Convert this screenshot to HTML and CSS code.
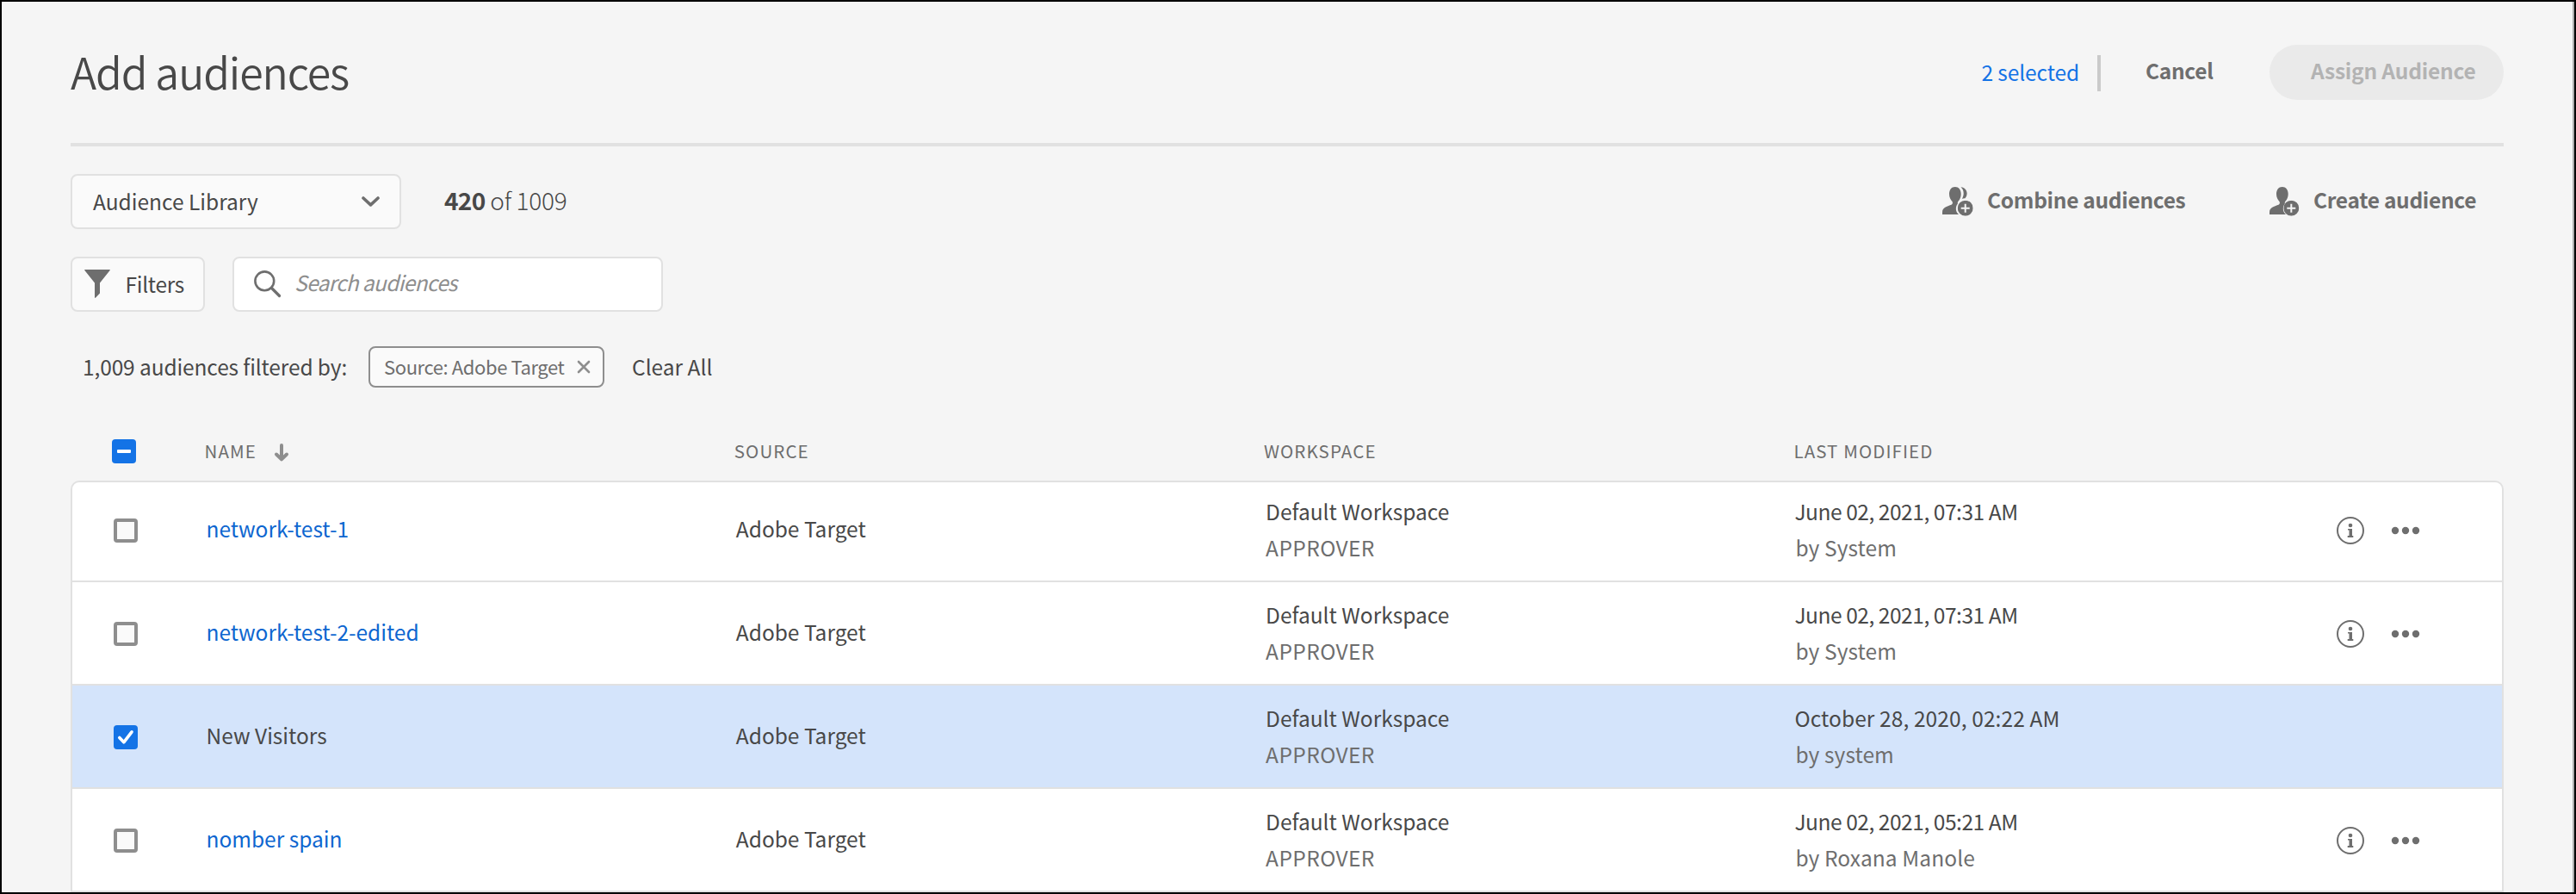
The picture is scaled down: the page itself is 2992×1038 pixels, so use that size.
FILE: index.html
```html
<!DOCTYPE html>
<html lang="en">
<head>
<meta charset="utf-8">
<title>Add audiences</title>
<link rel="stylesheet" href="styles.css">
</head>
<body>
<svg class="defs" aria-hidden="true">
  <symbol id="user" viewBox="0 0 36 34">
    <path d="M14.8 0C10.6 0 8 3.400 8 8.200C8 12 9.600 14.800 11.500 17C12.300 18.200 12 19.900 10.500 20.700C6.500 22.400 0 23.500 0 29.200V32H19C15.500 29.600 14.600 23.500 17.900 19.600C17.600 18.300 17.900 17.500 18.600 16.600C20.400 14.400 21.700 11.800 21.700 8.200C21.700 3.400 19 0 14.800 0Z"/>
  </symbol>
  <symbol id="plus" viewBox="0 0 18 18">
    <path fill-rule="evenodd" d="M9 0A9 9 0 1 1 9 18A9 9 0 1 1 9 0ZM8 4V8H4V10H8V14H10V10H14V8H10V4Z"/>
  </symbol>
  <symbol id="info" viewBox="0 0 32 32">
    <circle cx="16" cy="16" r="15" fill="none" stroke="currentColor" stroke-width="2"/>
    <circle cx="16" cy="10" r="2.300"/>
    <path d="M13 14H18V22H19.300V24H12.700V22H14.500V15.500H13Z"/>
  </symbol>
  <symbol id="more" viewBox="0 0 34 10">
    <circle cx="5" cy="5" r="4.200"/><circle cx="17" cy="5" r="4.200"/><circle cx="29" cy="5" r="4.200"/>
  </symbol>
</svg>
<div class="page">
  <header class="header">
    <h1 class="title">Add audiences</h1>
    <a class="selected-count">2 selected</a>
    <span class="divider"></span>
    <button class="cancel">Cancel</button>
    <button class="assign" disabled>Assign Audience</button>
  </header>

  <div class="toolbar">
    <div class="select"><span>Audience Library</span>
      <svg class="chevron" viewBox="0 0 21 12"><path d="M2 2L10.500 9.800L19 2" fill="none" stroke="currentColor" stroke-width="3.600" stroke-linecap="round" stroke-linejoin="round"/></svg>
    </div>
    <p class="count"><b>420</b> <span>of 1009</span></p>
    <button class="quiet combine">
      <svg class="user-icon" viewBox="0 0 36 34"><use href="#user" width="36" height="34"/><path d="M21.500 .2C26 .6 28.600 3.800 28.600 7.600C28.600 9.800 27.800 11.900 26.400 13.300C25.200 13.200 24 13.400 22.800 13.800C24 11.800 24.700 9.800 24.700 7.400C24.700 4.400 23.500 1.800 21.500 .2Z"/><use href="#plus" x="17.700" y="15.700" width="18" height="18"/></svg>
      <span>Combine audiences</span>
    </button>
    <button class="quiet create">
      <svg class="user-icon" viewBox="0 0 36 34"><use href="#user" width="36" height="34"/><use href="#plus" x="16.300" y="15.700" width="18" height="18"/></svg>
      <span>Create audience</span>
    </button>
  </div>

  <div class="search-row">
    <button class="filters">
      <svg class="funnel" viewBox="0 0 30 34"><path d="M.8 0H29.200Q30.400 0 29.600 1L18 15.500V27.500L13.200 32.500Q12 33.500 12 32V15.500L.4 1Q-.4 0 .8 0Z"/></svg>
      <span>Filters</span>
    </button>
    <div class="search">
      <svg class="magnifier" viewBox="0 0 32 32"><g fill="none" stroke="currentColor" stroke-linecap="round"><circle cx="12.300" cy="12.300" r="10.900" stroke-width="2.600"/><path d="M20.500 20.500L29.500 29.500" stroke-width="3.200"/></g></svg>
      <span>Search audiences</span>
    </div>
  </div>

  <div class="filter-row">
    <span class="filter-label">1,009 audiences filtered by:</span>
    <span class="tag"><span>Source: Adobe Target</span>
      <svg class="cross" viewBox="0 0 16 16"><path d="M2 2L14 14M14 2L2 14" fill="none" stroke="currentColor" stroke-width="2.600" stroke-linecap="round"/></svg>
    </span>
    <a class="clear">Clear All</a>
  </div>

  <div class="table">
    <div class="grid head">
      <span class="check mixed"></span>
      <span class="col-name">NAME
        <svg class="arrow" viewBox="0 0 18 22"><path d="M9 2V18M3 12.500L9 18.300L15 12.500" fill="none" stroke="currentColor" stroke-width="4" stroke-linecap="round" stroke-linejoin="round"/></svg>
      </span>
      <span>SOURCE</span>
      <span>WORKSPACE</span>
      <span>LAST MODIFIED</span>
    </div>
    <div class="body">
      <div class="grid row first">
        <span class="check"></span>
        <a class="cell link">network-test-1</a>
        <span class="cell">Adobe Target</span>
        <div class="cell lines">Default Workspace<small class="caps">APPROVER</small></div>
        <div class="cell lines date"><span class="tight">June 02, 2021, 07:31 AM</span><small>by System</small></div>
        <div class="actions"><svg class="info"><use href="#info"/></svg><svg class="more"><use href="#more"/></svg></div>
      </div>
      <div class="grid row">
        <span class="check"></span>
        <a class="cell link">network-test-2-edited</a>
        <span class="cell">Adobe Target</span>
        <div class="cell lines">Default Workspace<small class="caps">APPROVER</small></div>
        <div class="cell lines date"><span class="tight">June 02, 2021, 07:31 AM</span><small>by System</small></div>
        <div class="actions"><svg class="info"><use href="#info"/></svg><svg class="more"><use href="#more"/></svg></div>
      </div>
      <div class="grid row active">
        <span class="check on"><svg viewBox="0 0 20 20"><path d="M2.800 10.500L7.800 15.800L17 3.800" fill="none" stroke="#fff" stroke-width="3.600" stroke-linecap="round" stroke-linejoin="round"/></svg></span>
        <span class="cell">New Visitors</span>
        <span class="cell">Adobe Target</span>
        <div class="cell lines">Default Workspace<small class="caps">APPROVER</small></div>
        <div class="cell lines date"><span>October 28, 2020, 02:22 AM</span><small>by system</small></div>
      </div>
      <div class="grid row">
        <span class="check"></span>
        <a class="cell link">nomber spain</a>
        <span class="cell">Adobe Target</span>
        <div class="cell lines">Default Workspace<small class="caps">APPROVER</small></div>
        <div class="cell lines date"><span class="tight">June 02, 2021, 05:21 AM</span><small>by Roxana Manole</small></div>
        <div class="actions"><svg class="info"><use href="#info"/></svg><svg class="more"><use href="#more"/></svg></div>
      </div>
    </div>
  </div>
</div>
</body>
</html>
```
FILE: styles.css
```css
* { box-sizing: border-box; }

body {
  margin: 0;
  background: #f5f5f5;
  color: #484848;
  font: 24.5px/42px "Noto Sans CJK SC", "Open Sans", sans-serif;
}

svg { display: block; flex: none; fill: currentColor; }
button { border: 0; padding: 0; background: none; color: inherit; font: inherit; }
.defs { display: none; }

.page {
  height: 1038px;
  overflow: hidden;
  border: 2px solid #000;
  box-shadow: inset -2px 0 #adadad;
  padding: 0 82px 0 80px;
}

/* Header */
.header {
  display: flex;
  align-items: center;
  height: 168px;
  border-bottom: 4px solid #e1e1e1;
}
.title {
  flex: 1;
  margin: 0;
  padding-bottom: 4px;
  font-size: 50px;
  font-weight: 350;
  letter-spacing: -1.100px;
}
.selected-count { color: #1473e6; letter-spacing: -.1px; padding-bottom: 1px; }
.divider { width: 4px; height: 42px; margin: 2px 0 0 21px; background: #cacaca; }
.cancel { width: 78px; margin-left: 52px; padding-bottom: 5px; color: #6e6e6e; font-weight: 600; letter-spacing: -.3px; text-align: left; }
.assign {
  width: 272px;
  height: 64px;
  margin-left: 66px;
  padding: 0 0 5px 48px;
  border-radius: 32px;
  background: #eaeaea;
  color: #b3b3b3;
  font-weight: 600;
  letter-spacing: -.2px;
  text-align: left;
}

/* Toolbar */
.toolbar { display: flex; align-items: center; height: 64px; margin-top: 32px; }
.select {
  display: flex;
  align-items: center;
  justify-content: space-between;
  width: 384px;
  height: 64px;
  padding: 0 23px 0 24px;
  border: 2px solid #e1e1e1;
  border-radius: 8px;
  background: #fafafa;
}
.chevron { width: 21px; height: 12px; color: #6e6e6e; }
.count { flex: 1; margin: 0 0 0 50px; padding-bottom: 4px; font-size: 28px; font-weight: 300; letter-spacing: -.3px; white-space: nowrap; }
.count b { font-weight: 600; letter-spacing: -.7px; }
.quiet { display: flex; align-items: center; color: #6e6e6e; font-weight: 600; letter-spacing: -.3px; white-space: nowrap; }
.quiet span { padding-bottom: 5px; }
.user-icon { width: 36px; height: 34px; }
.combine { width: 380px; gap: 16px; }
.create { width: 272px; gap: 15px; }

/* Search */
.search-row { display: flex; gap: 32px; margin-top: 32px; }
.filters, .search {
  display: flex;
  align-items: center;
  height: 64px;
  border: 2px solid #e1e1e1;
  border-radius: 8px;
}
.filters { width: 156px; padding-left: 14px; gap: 17.500px; background: #fafafa; letter-spacing: -.3px; }
.funnel { width: 30px; height: 34px; color: #6e6e6e; }
.search { width: 500px; padding-left: 23px; gap: 15px; background: #fff; }
.search span { padding-bottom: 5px; color: #8e8e8e; font-style: italic; letter-spacing: -.7px; }
.magnifier { width: 32px; height: 32px; color: #6e6e6e; }

/* Applied filters */
.filter-row { display: flex; align-items: center; height: 48px; margin-top: 40px; padding-left: 14px; white-space: nowrap; }
.filter-label { width: 332px; padding-bottom: 1px; letter-spacing: -.12px; }
.tag {
  display: flex;
  align-items: center;
  justify-content: space-between;
  width: 274px;
  height: 48px;
  padding: 0 14px 0 16px;
  border: 2px solid #8e8e8e;
  border-radius: 8px;
  background: #fafafa;
  color: #6e6e6e;
  font-size: 22px;
  letter-spacing: -.4px;
}
.tag span { padding-bottom: 3px; }
.cross { width: 16px; height: 16px; color: #8e8e8e; }
.clear { margin-left: 32px; padding-bottom: 1px; }

/* Table */
.grid {
  display: grid;
  grid-template-columns: 107.500px repeat(3, 615.300px) 628.500px 1fr;
  align-items: center;
}
.head {
  height: 68px;
  margin-top: 40px;
  padding-left: 48px;
  color: #6e6e6e;
  font-size: 20.500px;
  line-height: 66px;
  letter-spacing: 1.100px;
}
.head > span:not(.check) { padding-bottom: 2px; }
.col-name { display: flex; align-items: center; gap: 20px; }
.arrow { width: 18px; height: 22px; margin-top: 5px; color: #8e8e8e; }

.body { border: 2px solid #e1e1e1; border-radius: 10px 10px 0 0; background: #fff; }
.row { height: 120px; padding: 2px 0 0 48px; border-bottom: 2px solid #e1e1e1; }
.first { height: 116px; padding: 0 0 2px 48px; }
.active { background: #d4e4fb; }
.cell { padding-bottom: 4px; }
.lines { padding-bottom: 2px; }
.cell small { display: block; color: #6e6e6e; font-size: inherit; }
.cell .caps { letter-spacing: .4px; }
.date { letter-spacing: .1px; }
.date span { position: relative; left: -1px; }
.tight { letter-spacing: -.45px; }
.link { color: #0d66d0; }

.check { width: 28px; height: 28px; border: 4px solid #8e8e8e; border-radius: 4px; background: #fafafa; }
.mixed, .on { display: grid; place-items: center; border: 0; background: #1473e6; }
.mixed::before { content: ""; width: 16px; height: 4px; border-radius: 1px; background: #fff; }
.on svg { width: 20px; height: 20px; }

.actions { display: flex; align-items: center; gap: 31px; color: #6e6e6e; }
.info { width: 32px; height: 32px; }
.more { width: 34px; height: 10px; }
```
